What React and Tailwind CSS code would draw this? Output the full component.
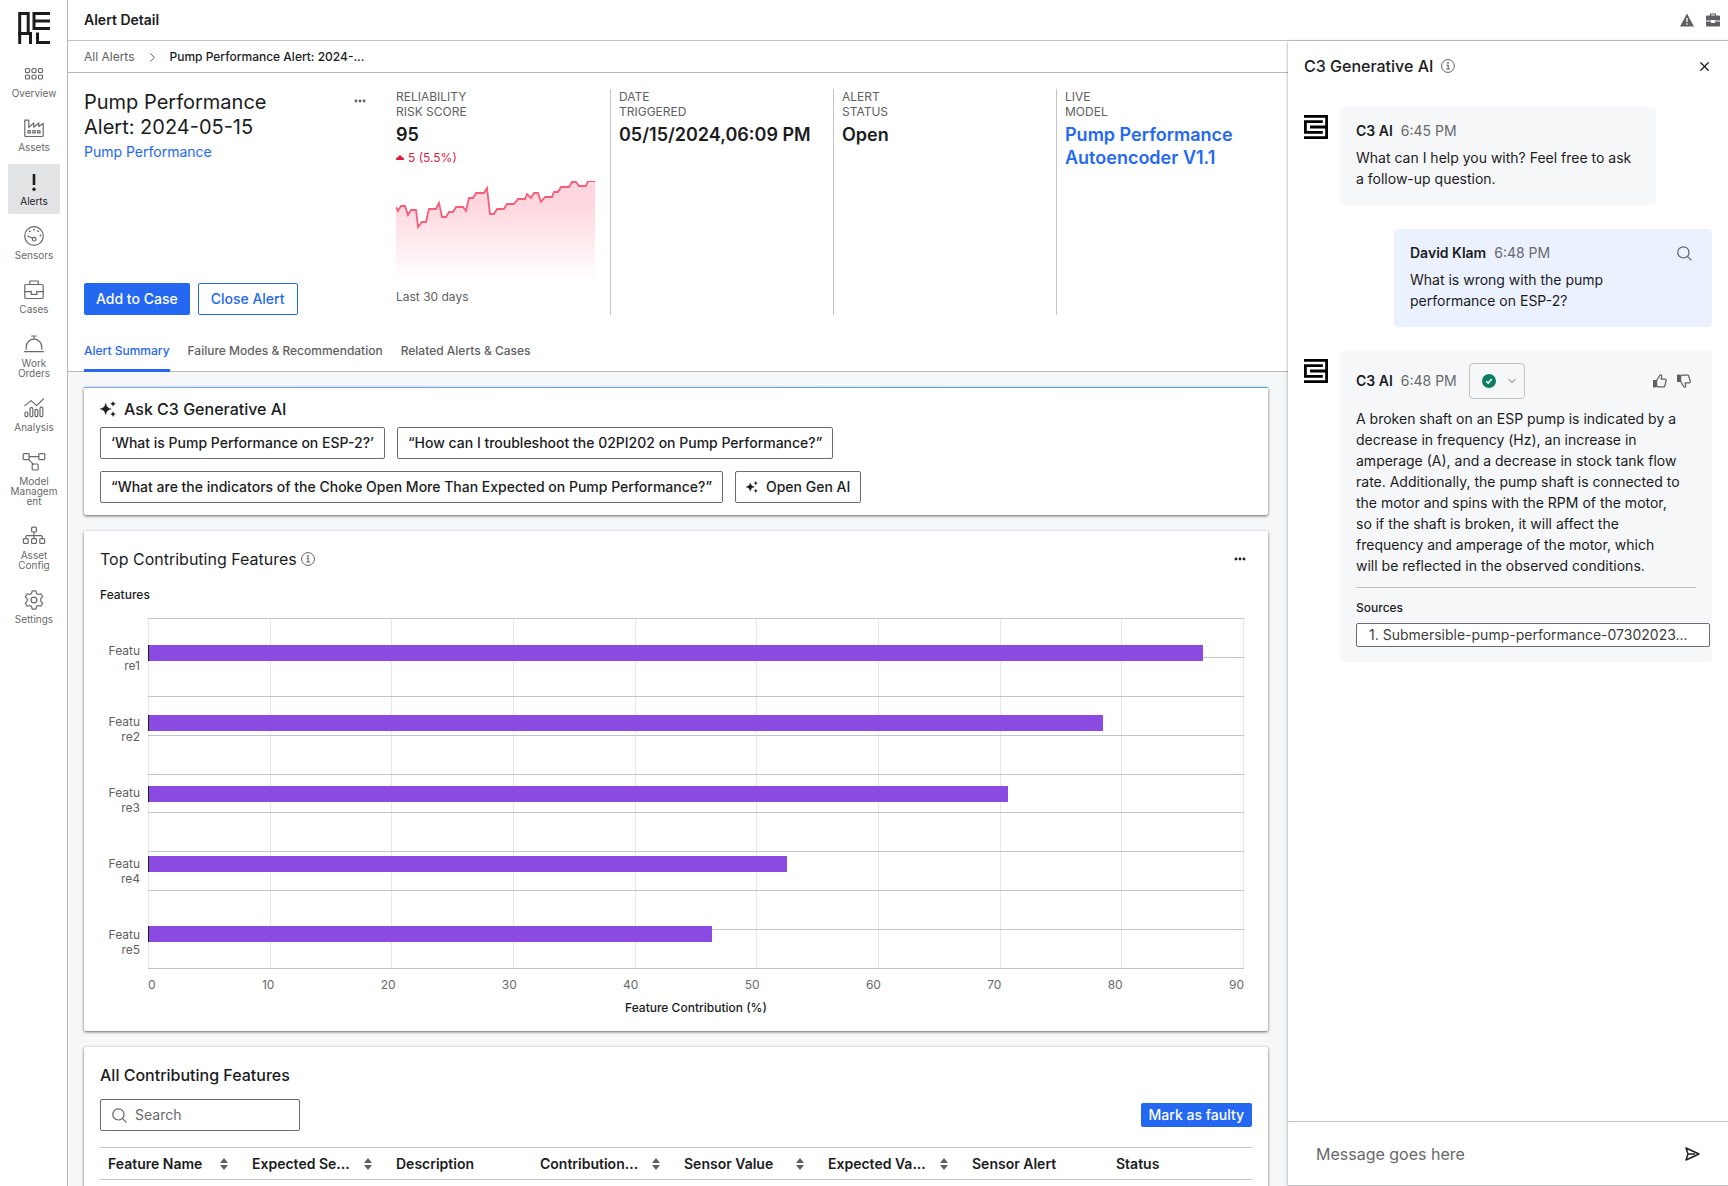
import { ChevronDown, ChevronRight, X } from 'lucide-react';

const RISK_POINTS =
  '0,26 2,30 5,25 9,25 12,34 15,29 20,29 22,46 26,41 30,41 33,28 40,28 43,22 46,36 50,36 53,31 57,31 60,26 67,26 70,30 73,17 77,17 80,12 88,12 91,7 94,33 98,33 101,28 108,28 111,23 118,23 122,18 129,18 131,13 135,17 138,12 142,12 145,21 149,16 156,16 158,11 162,11 165,6 173,6 176,1 180,1 183,5 190,5 192,0 199,0';

const FEATURES = [
  { name: 'Feature1', value: 86.6 },
  { name: 'Feature2', value: 78.4 },
  { name: 'Feature3', value: 70.6 },
  { name: 'Feature4', value: 52.5 },
  { name: 'Feature5', value: 46.3 },
];

const TICKS = [0, 10, 20, 30, 40, 50, 60, 70, 80, 90];

const COLUMNS = [
  { label: 'Feature Name', sortable: true },
  { label: 'Expected Se...', sortable: true },
  { label: 'Description', sortable: false },
  { label: 'Contribution...', sortable: true },
  { label: 'Sensor Value', sortable: true },
  { label: 'Expected Va...', sortable: true },
  { label: 'Sensor Alert', sortable: false },
  { label: 'Status', sortable: false },
];

const NAV = [
  {
    label: 'Overview',
    icon: [1.5, 8, 14.5].flatMap(x => [4.5, 11].map(y => <rect key={`${x}-${y}`} x={x} y={y} width="4" height="4" rx="1" />)),
  },
  {
    label: 'Assets',
    icon: (
      <>
        <path d="M.8 17.5V2.2h4v7.2l5-4.4v4.2l5-4.2v3.6l4.4-3.2v12.1a1 1 0 0 1-1 1H1.8a1 1 0 0 1-1-1z" />
        <rect x="4" y="12.5" width="2.4" height="2.4" />
        <rect x="8.8" y="12.5" width="2.4" height="2.4" />
        <rect x="13.6" y="12.5" width="2.4" height="2.4" />
      </>
    ),
  },
  {
    label: 'Alerts',
    active: true,
    icon: (
      <>
        <path d="M10 2v11" strokeWidth="2.6" strokeLinecap="butt" />
        <circle cx="10" cy="17.2" r="1.7" fill="currentColor" stroke="none" />
      </>
    ),
  },
  {
    label: 'Sensors',
    icon: (
      <>
        <circle cx="10" cy="10" r="9.3" />
        <circle cx="10.2" cy="13.2" r="1.8" />
        <path d="M8.5 12.3 3.8 10" />
        <path d="M10 3.6v.1M5.8 5.2v.1M14.3 5.2v.1M16.4 9.4v.1" strokeWidth="1.8" />
      </>
    ),
  },
  {
    label: 'Cases',
    icon: (
      <>
        <rect x=".8" y="4.5" width="18.4" height="14" rx="1.2" />
        <path d="M5.8 4.5V1h8.4v3.5M.8 11.6h6.4M12.8 11.6h6.4M7.2 11.2v3.2h5.6v-3.2" />
      </>
    ),
  },
  {
    label: 'Work Orders',
    icon: <path d="M2.2 15.2V13a7.8 7.8 0 0 1 15.6 0v2.2M.6 17.6h18.8M10 5V2.4M7.8 2h4.4" />,
  },
  {
    label: 'Analysis',
    icon: (
      <>
        <path d="m.8 7.6 6.4-5 5.4 5L19.4 1" />
        <rect x="1" y="14" width="2.8" height="4.6" rx="1" />
        <rect x="6" y="9.6" width="2.8" height="9" rx="1" />
        <rect x="11" y="11.4" width="2.8" height="7.2" rx="1" />
        <rect x="16" y="9.2" width="2.8" height="9.4" rx="1" />
      </>
    ),
  },
  {
    label: 'Model Managem ent',
    icon: (
      <>
        <rect x="-.8" y="1.6" width="6" height="6" rx="1" />
        <rect x="14.8" y="1.6" width="6" height="6" rx="1" />
        <rect x="8.2" y="12" width="6" height="6" rx="1" />
        <path d="M5.2 4.6h9.6M4.6 7.4l4.8 5" />
      </>
    ),
  },
  {
    label: 'Asset Config',
    icon: (
      <>
        <rect x="7.6" y="1.2" width="4.8" height="4.8" rx="1" />
        <rect x="-.6" y="12.6" width="4.8" height="4.8" rx="1" />
        <rect x="7.6" y="12.6" width="4.8" height="4.8" rx="1" />
        <rect x="15.8" y="12.6" width="4.8" height="4.8" rx="1" />
        <path d="M10 6v6.6M1.8 12.6v-2a1 1 0 0 1 1-1h14.4a1 1 0 0 1 1 1v2" />
      </>
    ),
  },
  {
    label: 'Settings',
    icon: (
      <>
        <path d="M8.2.8h3.6l.6 2.6 2 1.1 2.5-.8 1.8 3.1-1.9 1.9v2.6l1.900 1.900-1.800 3.100-2.500-.8-2 1.100-.6 2.600H8.200l-.6-2.600-2-1.100-2.500.8-1.800-3.100 1.900-1.900V8.700L1.300 6.800l1.800-3.100 2.500.8 2-1.100z" />
        <circle cx="10" cy="10" r="2.9" />
      </>
    ),
  },
];

function InfoIcon() {
  return (
    <svg width="14" height="14" viewBox="0 0 14 14" fill="none" stroke="#5f6062" aria-hidden="true">
      <circle cx="7" cy="7" r="6.4" />
      <path d="M5.6 6.4h1.6v3.4M5.2 10h3.8" strokeWidth="1.1" />
      <circle cx="7" cy="4" r=".9" fill="#5f6062" stroke="none" />
    </svg>
  );
}

function SearchIcon() {
  return (
    <svg width="15" height="15" viewBox="0 0 15 15" fill="none" stroke="#5f6062" strokeWidth="1.2" className="shrink-0" aria-hidden="true">
      <circle cx="6.4" cy="6.4" r="5.6" />
      <path d="m10.400 10.400 4 4" />
    </svg>
  );
}

function ThumbIcon({ className }) {
  return (
    <svg width="14" height="14" viewBox="0 0 14 14" className={className} aria-hidden="true">
      <path d="M0 6h3.400v7.400H0z" fill="currentColor" />
      <path
        d="M3.600 6.600 7 1c1.200-.4 2 .4 1.700 1.700L8.100 5.200h4a1.100 1.100 0 0 1 1.100 1.400l-1.400 5.400a1.200 1.200 0 0 1-1.200.9H5.200l-1.600-.8z"
        fill="none"
        stroke="currentColor"
        strokeWidth="1.200"
        strokeLinejoin="round"
      />
    </svg>
  );
}

function Sparkle({ size }) {
  return (
    <svg width={size} height={size} viewBox="0 0 16 16" fill="#1b1c1e" aria-hidden="true">
      <path d="M5.700 2.400c.9 3.500 2 4.600 5.500 5.500-3.500.9-4.600 2-5.500 5.600-.9-3.600-2-4.700-5.600-5.600 3.600-.9 4.700-2 5.600-5.500z" stroke="#1b1c1e" strokeWidth=".5" />
      <path d="M13 0l.9 1.900 2 .9-2 .9-.9 1.900-.9-1.900-2-.9 2-.9z" />
      <path d="M13 10.300l.9 1.900 2 .9-2 .9-.9 2-.9-2-2-.9 2-.9z" />
    </svg>
  );
}

function Dots() {
  return (
    <svg width="12" height="4" viewBox="0 0 12 4" fill="currentColor" aria-hidden="true">
      <circle cx="2" cy="2" r="1.4" />
      <circle cx="6" cy="2" r="1.4" />
      <circle cx="10" cy="2" r="1.4" />
    </svg>
  );
}

function BrandLogo() {
  return (
    <svg width="32" height="32" viewBox="0 0 32 32" fill="none" stroke="#1b1c1e" strokeWidth="3" aria-hidden="true">
      <path d="M1.700 32V1.500h8.500V22M0 21.500h14M12.500 20v12" />
      <path d="M32 1.500H16v15h16M16 9h16M19.500 20.500v10H32" />
    </svg>
  );
}

function C3Logo() {
  return (
    <svg width="24" height="24" viewBox="0 0 24 24" fill="none" stroke="#000" strokeWidth="2.8" className="shrink-0" aria-hidden="true">
      <path d="M0 1.400h22.600v21.200H0M22.600 12H6" />
      <path d="M18.800 6.700H1.400v10.600h17.400" />
    </svg>
  );
}

function SortIcon() {
  return (
    <svg width="8" height="12" viewBox="0 0 8 12" fill="#5f6062" className="shrink-0" aria-hidden="true">
      <path d="M4 0l4 5H0zM4 12L0 7h8z" />
    </svg>
  );
}

function Sidebar() {
  return (
    <aside className="flex w-[68px] shrink-0 flex-col border-r border-[#b9babf] bg-white">
      <div className="flex h-14 pt-3 pl-[18px]">
        <BrandLogo />
      </div>
      <nav className="flex flex-col gap-1 pr-[7px] pl-2">
        {NAV.map(item => (
          <a
            key={item.label}
            href="#"
            className={
              item.active
                ? 'flex flex-col items-center gap-1 rounded-xs bg-[#e2e3e5] py-2 text-center text-[10px] leading-[10px] text-[#1b1c1e]'
                : 'flex flex-col items-center gap-1 py-2 text-center text-[10px] leading-[10px] text-[#68696c]'
            }
          >
            <svg width="20" height="20" viewBox="0 0 20 20" fill="none" stroke="currentColor" strokeWidth="1.2" strokeLinejoin="round" strokeLinecap="round" className="overflow-visible" aria-hidden="true">
              {item.icon}
            </svg>
            <span>{item.label}</span>
          </a>
        ))}
      </nav>
    </aside>
  );
}

function Metric({ label, children }) {
  return (
    <div className="flex min-w-0 flex-1 flex-col border-l border-[#c3c4ca] pr-[15px] pl-2 first:border-transparent">
      <div className="text-xs leading-[15px] whitespace-pre-line text-[#5f6062] uppercase">{label}</div>
      <div className="mt-1 text-lg leading-[23px] font-semibold">{children}</div>
    </div>
  );
}

function Sparkline() {
  return (
    <svg viewBox="0 0 199 101" className="mt-4 block w-full" aria-hidden="true">
      <defs>
        <linearGradient id="risk" x1="0" y1="0" x2="0" y2="1">
          <stop offset="0.2" stopColor="#ffd6dd" />
          <stop offset="1" stopColor="#ffffff" />
        </linearGradient>
      </defs>
      <polygon points={`${RISK_POINTS} 199,101 0,101`} fill="url(#risk)" />
      <polyline points={RISK_POINTS} fill="none" stroke="#fb5c78" strokeWidth="1.8" />
    </svg>
  );
}

function AlertHeader() {
  return (
    <section className="bg-white">
      <div className="flex pt-4 pr-[9px] pl-4">
        <div className="flex w-[303px] shrink-0 flex-col">
          <div className="flex items-start justify-between pr-[21px]">
            <div className="pt-px">
              <h1 className="w-52 text-xl leading-[25px]">Pump Performance Alert: 2024-05-15</h1>
              <a href="#" className="mt-0.5 block text-sm text-[#2468f2]">Pump Performance</a>
            </div>
            <button type="button" aria-label="More actions" className="py-[10px] text-[#5f6062]">
              <Dots />
            </button>
          </div>
          <div className="mt-auto flex gap-2">
            <button type="button" className="h-8 rounded-xs bg-[#2468f2] px-3 text-sm font-medium text-white">Add to Case</button>
            <button type="button" className="h-8 rounded-xs border border-[#2468f2] px-3 text-sm font-medium text-[#2468f2]">Close Alert</button>
          </div>
        </div>
        <div className="flex min-h-[226px] flex-1">
          <Metric label={'Reliability\nRisk Score'}>
            95
            <div className="mt-1 flex items-center gap-1 text-xs leading-[15px] font-normal text-[#da1e45]">
              <svg width="8" height="5" viewBox="0 0 8 5" fill="currentColor" aria-hidden="true">
                <path d="M4 0l4 3.500V5H0V3.500z" />
              </svg>
              5 (5.5%)
            </div>
            <Sparkline />
            <div className="mt-[7px] text-xs leading-[15px] font-normal text-[#5f6062]">Last 30 days</div>
          </Metric>
          <Metric label={'Date\nTriggered'}>
            <span className="whitespace-nowrap">05/15/2024,06:09 PM</span>
          </Metric>
          <Metric label={'Alert\nStatus'}>Open</Metric>
          <Metric label={'Live\nModel'}>
            <a href="#" className="text-[#2468f2]">Pump Performance Autoencoder V1.1</a>
          </Metric>
        </div>
      </div>
      <nav className="mt-5 flex gap-[18px] border-b border-[#b9babf] pl-4 text-xs font-medium text-[#5f6062]">
        <a href="#" className="-mb-px border-b-3 border-[#2468f2] pt-2 pb-[10px] text-[#2468f2]">Alert Summary</a>
        <a href="#" className="pt-2">Failure Modes &amp; Recommendation</a>
        <a href="#" className="pt-2">Related Alerts &amp; Cases</a>
      </nav>
    </section>
  );
}

function PromptButton({ children }) {
  return (
    <button type="button" className="flex h-8 items-center gap-2 rounded-xs border border-[#6b6c7a] bg-white px-[10px] text-sm font-medium">
      {children}
    </button>
  );
}

function AskCard() {
  return (
    <section className="rounded-xs bg-white shadow-[0_1px_3px_rgba(0,0,0,0.6)]">
      <div className="h-px rounded-t-xs bg-linear-to-r from-[#7ba6f7] to-[#4fa9d6]" />
      <div className="px-4 pt-[11px] pb-3">
        <h2 className="flex items-center gap-2 text-base leading-5 font-medium">
          <Sparkle size={16} />
          Ask C3 Generative AI
        </h2>
        <div className="mt-2 flex flex-wrap gap-3">
          <PromptButton>‘What is Pump Performance on ESP-2?’</PromptButton>
          <PromptButton>“How can I troubleshoot the 02PI202 on Pump Performance?”</PromptButton>
        </div>
        <div className="mt-3 flex flex-wrap gap-3">
          <PromptButton>“What are the indicators of the Choke Open More Than Expected on Pump Performance?”</PromptButton>
          <PromptButton>
            <Sparkle size={12} />
            Open Gen AI
          </PromptButton>
        </div>
      </div>
    </section>
  );
}

function FeatureChart() {
  return (
    <section className="rounded-xs bg-white px-4 pt-[18px] pb-[15px] shadow-[0_1px_3px_rgba(0,0,0,0.6)]">
      <div className="flex items-center justify-between pr-[6px]">
        <h2 className="flex items-center gap-1 text-base leading-5">
          Top Contributing Features
          <InfoIcon />
        </h2>
        <button type="button" aria-label="Chart options">
          <Dots />
        </button>
      </div>
      <div className="mt-[18px] text-xs leading-4 font-medium">Features</div>
      <div className="mt-[15px] mr-2 flex h-[351px] items-start">
        {/* label rows are slightly taller than the bar rows */}
        <div className="mt-1 flex h-[355px] w-12 flex-col">
          {FEATURES.map(f => (
            <div key={f.name} className="flex flex-1 items-center justify-end pr-2">
              <span className="w-[34px] text-right text-xs leading-[15px] break-all text-[#5f6062]">{f.name}</span>
            </div>
          ))}
        </div>
        <div className="relative h-full flex-1">
          <div className="absolute inset-0 flex border-l border-[#e6e7ea]">
            {TICKS.slice(1).map(t => (
              <div key={t} className="flex-1 border-r border-[#e6e7ea]" />
            ))}
          </div>
          <div className="absolute inset-0 flex flex-col border-t border-[#c3c4ca]">
            {TICKS.slice(1).map(t => (
              <div key={t} className="flex-1 border-b border-[#c3c4ca]" />
            ))}
          </div>
          <div className="relative flex h-full flex-col">
            {FEATURES.map(f => (
              <div key={f.name} className="flex flex-1 items-center">
                <div className="h-4 border-l border-[#1b1c1e] bg-[#8b4ae2]" style={{ width: `${(f.value / 90) * 100}%` }} />
              </div>
            ))}
          </div>
        </div>
      </div>
      <div className="mt-2 mr-2 ml-12 flex justify-between text-xs leading-4 text-[#68696c]">
        {TICKS.map(t => (
          <span key={t}>{t}</span>
        ))}
      </div>
      <div className="mt-[7px] mr-2 ml-12 text-center text-xs leading-4 font-medium">Feature Contribution (%)</div>
    </section>
  );
}

function FeatureTable() {
  return (
    <section className="rounded-xs bg-white px-4 pt-[18px] pb-4 shadow-[0_1px_3px_rgba(0,0,0,0.6)]">
      <h2 className="text-base leading-5 font-medium">All Contributing Features</h2>
      <div className="mt-[14px] flex items-center justify-between">
        <label className="flex h-8 w-50 items-center gap-2 rounded-xs border border-[#6b6c7a] px-[11px]">
          <SearchIcon />
          <input type="search" aria-label="Search features" placeholder="Search" className="w-full text-sm outline-none placeholder:text-[#68696c]" />
        </label>
        <button type="button" className="h-6 rounded-xs bg-[#2468f2] px-2 text-sm font-medium text-white">Mark as faulty</button>
      </div>
      <table className="mt-4 w-full table-fixed text-left text-sm">
        <thead>
          <tr className="h-8 border-y border-[#c3c4ca]">
            {COLUMNS.map(col => (
              <th key={col.label} scope="col" className="px-2 font-semibold">
                <div className="flex items-center justify-between pr-2 whitespace-nowrap">
                  {col.label}
                  {col.sortable && <SortIcon />}
                </div>
              </th>
            ))}
          </tr>
        </thead>
        <tbody>
          <tr className="h-8">
            <td colSpan={8} />
          </tr>
        </tbody>
      </table>
    </section>
  );
}

function Sender({ name, time }) {
  return (
    <div className="flex items-center gap-2 text-sm leading-4">
      <span className="font-semibold">{name}</span>
      <span className="text-[#68696c]">{time}</span>
    </div>
  );
}

function ChatPanel() {
  return (
    <aside className="z-10 flex w-[440px] shrink-0 flex-col bg-white shadow-[0_1px_3px_rgba(0,0,0,0.4)]">
      <div className="flex items-center justify-between py-[15px] pr-4 pl-4">
        <h2 className="flex items-center gap-2 text-base leading-5 font-medium">
          C3 Generative AI
          <InfoIcon />
        </h2>
        <button type="button" aria-label="Close panel">
          <X size={15} strokeWidth={2} />
        </button>
      </div>
      <div className="flex flex-1 flex-col gap-6 px-4 pt-4 text-sm leading-[21px]">
        <div className="flex items-start gap-3">
          <div className="pt-2"><C3Logo /></div>
          <div className="w-79 rounded-sm bg-[#f6f7f9] p-4">
            <Sender name="C3 AI" time="6:45 PM" />
            <p className="mt-2">What can I help you with? Feel free to ask a follow-up question.</p>
          </div>
        </div>
        <div className="w-[318px] self-end rounded-sm bg-[#ebf1fe] p-4">
          <div className="flex h-4 items-center justify-between pr-1">
            <Sender name="David Klam" time="6:48 PM" />
            <button type="button" aria-label="Search this question"><SearchIcon /></button>
          </div>
          <p className="mt-2 w-60">What is wrong with the pump performance on ESP-2?</p>
        </div>
        <div className="flex items-start gap-3">
          <div className="pt-2"><C3Logo /></div>
          <div className="min-w-0 flex-1 rounded-sm bg-[#f6f7f9] px-4 pt-3 pb-[15px]">
            <div className="flex items-center gap-3">
              <Sender name="C3 AI" time="6:48 PM" />
              <button type="button" aria-label="Answer status" className="flex h-9 w-14 items-center justify-between rounded-sm border border-[#c3c4ca] pr-[6px] pl-3">
                <svg width="14" height="14" viewBox="0 0 14 14" aria-hidden="true">
                  <circle cx="7" cy="7" r="7" fill="#0a7d63" />
                  <path d="m4.200 7.200 2 1.900 3.600-4" fill="none" stroke="#fff" strokeWidth="1.500" />
                </svg>
                <ChevronDown size={12} strokeWidth={2} className="text-[#5f6062]" />
              </button>
              <div className="ml-auto flex gap-[10px] pr-[5px] text-[#5f6062]">
                <button type="button" aria-label="Good answer"><ThumbIcon /></button>
                <button type="button" aria-label="Bad answer"><ThumbIcon className="-scale-y-100" /></button>
              </div>
            </div>
            <p className="mt-[9px]">
              A broken shaft on an ESP pump is indicated by a decrease in frequency (Hz), an increase in amperage (A), and a decrease in stock tank flow rate. Additionally, the pump shaft is connected to the motor and spins with the RPM of the motor,
              <br />
              so if the shaft is broken, it will affect the
              <br />
              frequency and amperage of the motor, which
              <br />
              will be reflected in the observed conditions.
            </p>
            <hr className="mt-[11px] border-[#c3c4ca]" />
            <h3 className="mt-3 text-xs leading-4 font-medium">Sources</h3>
            <a href="#" className="mt-[7px] block h-6 w-[354px] rounded-xs border border-[#6b6c7a] bg-white px-3 text-sm leading-[22px] whitespace-nowrap text-[#3c3d40]">
              1. Submersible-pump-performance-07302023...
            </a>
          </div>
        </div>
      </div>
      <form className="flex h-[65px] items-center border-y border-[#c3c4ca] px-7">
        <input aria-label="Message" placeholder="Message goes here" className="flex-1 text-base outline-none placeholder:text-[#68696c]" />
        <button type="button" aria-label="Send message">
          <svg width="15" height="14" viewBox="0 0 15 14" fill="none" stroke="#1b1c1e" strokeWidth="1.400" strokeLinejoin="round" aria-hidden="true">
            <path d="M1 1l13 6-13 6 2-6zM3 7h7" />
          </svg>
        </button>
      </form>
    </aside>
  );
}

export default function App() {
  return (
    <div className="flex h-screen overflow-hidden bg-white font-['Inter',sans-serif] text-[#1b1c1e]">
      <Sidebar />
      <div className="flex min-w-0 flex-1 flex-col">
        <header className="flex h-[41px] shrink-0 items-center justify-between border-b border-[#c3c4ca] pr-2 pl-4">
          <div className="text-sm font-semibold">Alert Detail</div>
          <div className="flex items-center gap-3 text-[#5f6062]">
            <svg width="14" height="14" viewBox="0 0 14 14" aria-hidden="true">
              <path d="M7 .5 14 13.500H0z" fill="currentColor" />
              <path d="M7 5v4M7 10.300v1.500" stroke="#fff" strokeWidth="1.300" />
            </svg>
            <svg width="14" height="14" viewBox="0 0 14 14" fill="currentColor" aria-hidden="true">
              <path d="M4 2.500V.5h6v2h3a1 1 0 0 1 1 1v4H9V7H5v.5H0v-4a1 1 0 0 1 1-1zM5.200 1.600v.9h3.600v-.9zM0 8.500h5V10h4V8.500h5v4a1 1 0 0 1-1 1H1a1 1 0 0 1-1-1z" />
            </svg>
          </div>
        </header>
        <div className="flex min-h-0 flex-1">
          <main className="flex min-w-0 flex-1 flex-col overflow-hidden bg-[#f6f7f9]">
            <div className="flex h-8 shrink-0 items-center gap-[10px] border-b border-[#b9babf] bg-white pt-px pl-4 text-xs">
              <a href="#" className="text-[#5f6062]">All Alerts</a>
              <ChevronRight size={15} strokeWidth={1.6} className="text-[#5f6062]" />
              <span className="font-medium">Pump Performance Alert: 2024-...</span>
            </div>
            <AlertHeader />
            <div className="flex flex-col gap-4 pt-[15px] pr-5 pl-4">
              <AskCard />
              <FeatureChart />
              <FeatureTable />
            </div>
          </main>
          <ChatPanel />
        </div>
      </div>
    </div>
  );
}
